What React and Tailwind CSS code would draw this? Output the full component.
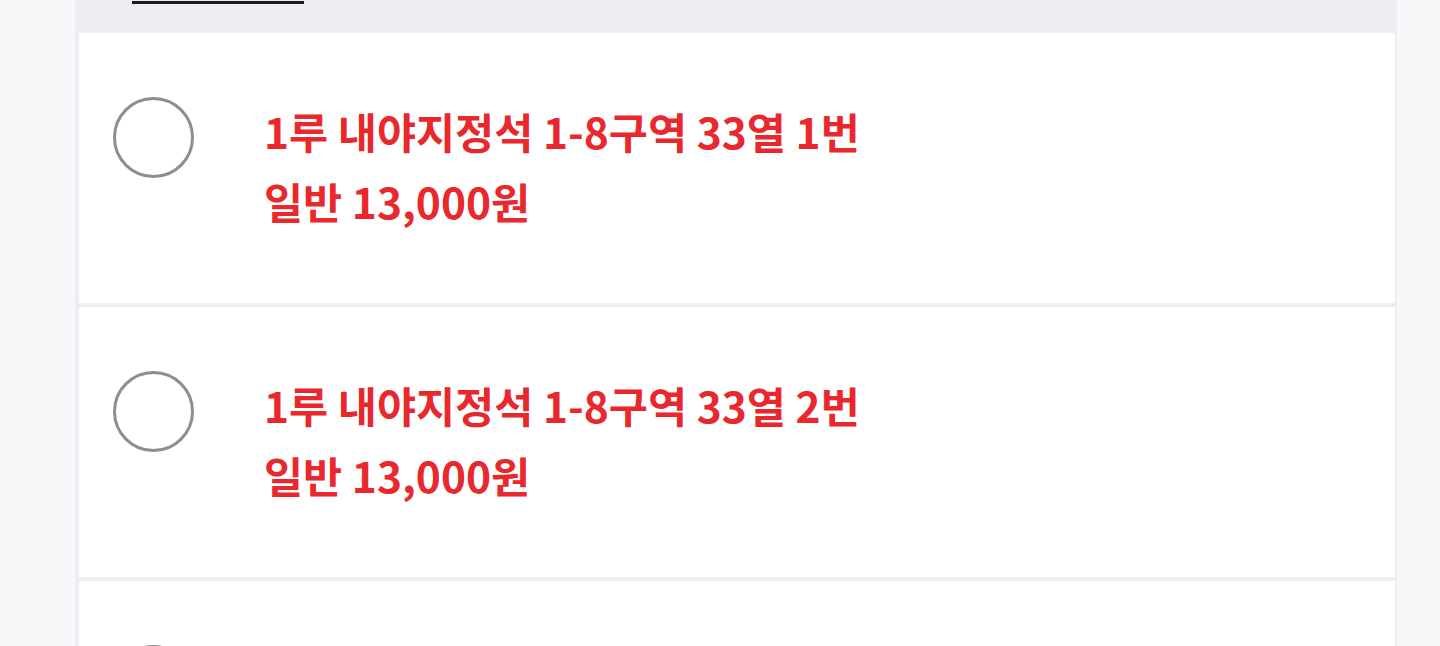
const seats = [
  { id: 1, name: "1루 내야지정석 1-8구역 33열 1번", price: "일반 13,000원" },
  { id: 2, name: "1루 내야지정석 1-8구역 33열 2번", price: "일반 13,000원" },
  { id: 3, name: "1루 내야지정석 1-8구역 33열 3번", price: "일반 13,000원" },
];

const SeatRow = ({ seat }) => {
  return (
    <div className="flex items-start h-[270px] shrink-0 bg-white pl-[34px] pt-[64px]">
      {/* radio */}
      <div className="w-[81px] h-[81px] shrink-0 rounded-full border-[3px] border-[#8e8e8e] bg-white" />

      <div className="ml-[70px] mt-[-1px] flex flex-col text-[42.5px] leading-[70px] font-bold text-[#e8282d]">
        <span>{seat.name}</span>
        <span>{seat.price}</span>
      </div>
    </div>
  );
};

const App = () => {
  return (
    <div
      className="w-full h-[646px] overflow-hidden bg-[#f7f8fa] flex"
      style={{ fontFamily: '"Noto Sans CJK KR", "Noto Sans", sans-serif' }}
    >
      <div className="ml-[75px] w-[1322px] h-full bg-[#eceef1] flex flex-col pl-[4px] pr-[2px]">
        {/* Header (scrolled off) */}
        <div className="h-[33px] shrink-0 flex items-start pl-[53px]">
          <div className="w-[172px] h-[4px] border-b-[3px] border-[#1b1b1b]" />
        </div>

        {/* Seat list */}
        <div className="flex flex-col gap-[4px]">
          {seats.map((seat) => (
            <SeatRow key={seat.id} seat={seat} />
          ))}
        </div>
      </div>
    </div>
  );
};

export default App;
